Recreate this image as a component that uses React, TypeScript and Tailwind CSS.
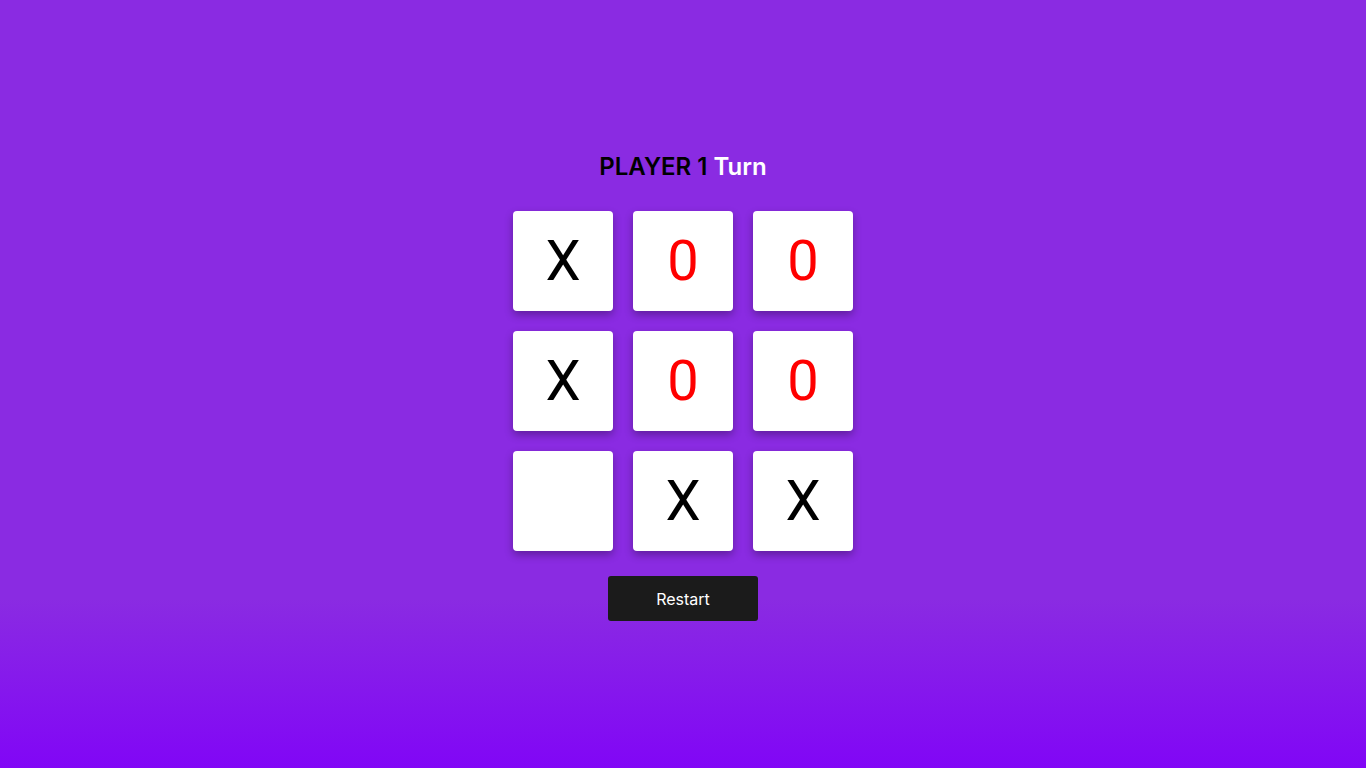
const board = ["X", "0", "0", "X", "0", "0", "", "X", "X"];

export default function App() {
  return (
    <div
      className="min-h-screen w-full flex flex-col items-center justify-center pt-[4px] bg-[linear-gradient(to_bottom,#8a2be2_78%,#8106f6_100%)]"
      style={{ fontFamily: "Inter, 'Open Sans', sans-serif" }}
    >
      <h1 className="text-[24px] leading-[32px] font-semibold text-black mb-[28px]">
        PLAYER 1 <span className="text-white">Turn</span>
      </h1>

      <div className="grid grid-cols-[repeat(3,100px)] gap-[20px]">
        {board.map((cell, i) => (
          <div
            key={i}
            className={`w-[100px] h-[100px] bg-white rounded-[4px] shadow-[0_4px_8px_rgba(0,0,0,0.3)] flex items-center justify-center text-[56px] font-normal ${
              cell === "0" ? "text-[#ff0000]" : "text-black"
            }`}
            style={{ fontFamily: "Roboto, 'Open Sans', sans-serif" }}
          >
            {cell}
          </div>
        ))}
      </div>

      <button className="mt-[25px] w-[150px] h-[45px] bg-[#1b1b1b] text-white text-[16px] font-normal rounded-[3px]">
        Restart
      </button>
    </div>
  );
}
